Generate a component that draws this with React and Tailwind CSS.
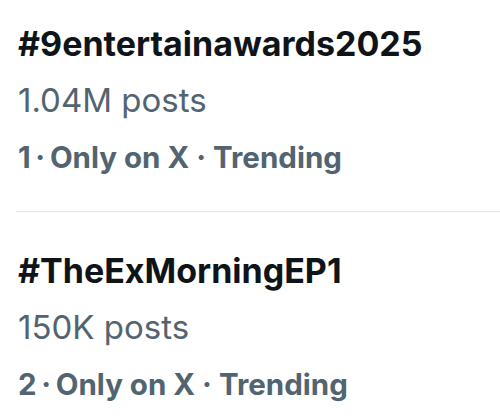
export default function App() {
  const items = [
    { tag: "#9entertainawards2025", posts: "1.04M posts", rank: "1" },
    { tag: "#TheExMorningEP1", posts: "150K posts", rank: "2" },
  ];
  return (
    <div className="w-[500px] h-[419px] bg-white overflow-hidden" style={{ fontFamily: "Inter, 'Noto Sans', sans-serif" }}>
      <div className="pl-[18px] pt-[15px] pb-[25px]">
        <Item {...items[0]} />
      </div>
      <div className="ml-[16px] h-px bg-[#e4e7ea]" />
      <div className="pl-[18px] pt-[30px]">
        <Item {...items[1]} />
      </div>
    </div>
  );
}

function Item({ tag, posts, rank }) {
  return (
    <div className="flex flex-col">
      <div className="text-[34px] leading-[57px] font-bold text-[#0f1419]">{tag}</div>
      <div className="text-[33px] leading-[57px] text-[#536471]">{posts}</div>
      <div className="text-[29.5px] leading-[57px] font-bold text-[#536471]">
        {rank}{"\u2009·\u2009"}Only on X · Trending
      </div>
    </div>
  );
}
